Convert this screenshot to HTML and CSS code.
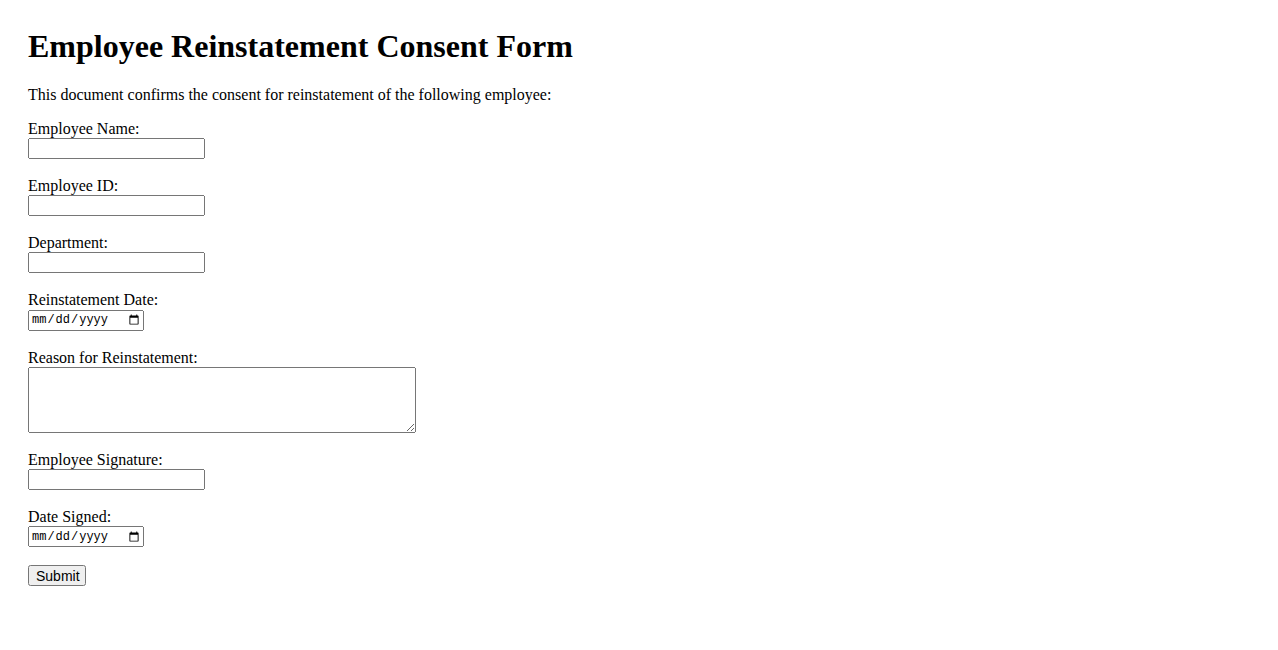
FILE: index.html
```html
<!DOCTYPE html>
<html lang="en">
  <head>
    <meta charset="UTF-8" />
    <meta name="viewport" content="width=device-width, initial-scale=1.0" />
    <title>Employee Reinstatement Consent Form</title>
    <link rel="stylesheet" href="styles.css">
  </head>
  <body>
    <h1>Employee Reinstatement Consent Form</h1>
    <p>This document confirms the consent for reinstatement of the following employee:</p>

    <form>
      <label for="name">Employee Name:</label><br>
      <input type="text" id="name" name="name"><br><br>

      <label for="emp-id">Employee ID:</label><br>
      <input type="text" id="emp-id" name="emp-id"><br><br>

      <label for="dept">Department:</label><br>
      <input type="text" id="dept" name="dept"><br><br>

      <label for="reinstate-date">Reinstatement Date:</label><br>
      <input type="date" id="reinstate-date" name="reinstate-date"><br><br>

      <label for="reason">Reason for Reinstatement:</label><br>
      <textarea id="reason" name="reason" rows="4" cols="50"></textarea><br><br>

      <label for="signature">Employee Signature:</label><br>
      <input type="text" id="signature" name="signature"><br><br>

      <label for="date-signed">Date Signed:</label><br>
      <input type="date" id="date-signed" name="date-signed"><br><br>

      <input type="submit" value="Submit">
    </form>
  </body>
</html>
```

FILE: styles.css
```css
body {
  margin: 8px;
  padding: 20px;
  font-family: "Liberation Serif", "Times New Roman", serif;
}
h1 {
  margin-top: 0;
}
input,
button,
textarea {
  font-family: "Liberation Sans", Arial, sans-serif;
}
input[type="text"] {
  box-sizing: border-box;
  width: 177px;
  height: 21px;
}
input[type="date"] {
  box-sizing: border-box;
  width: 116px;
  height: 21px;
  font-family: "Liberation Mono", monospace;
  font-size: 12px;
}
textarea {
  box-sizing: border-box;
  width: 388px;
  height: 66px;
  vertical-align: top;
  font-family: "Liberation Mono", monospace;
}
input[type="submit"] {
  box-sizing: border-box;
  width: 58px;
  height: 21px;
  font-size: 14px;
}
```
